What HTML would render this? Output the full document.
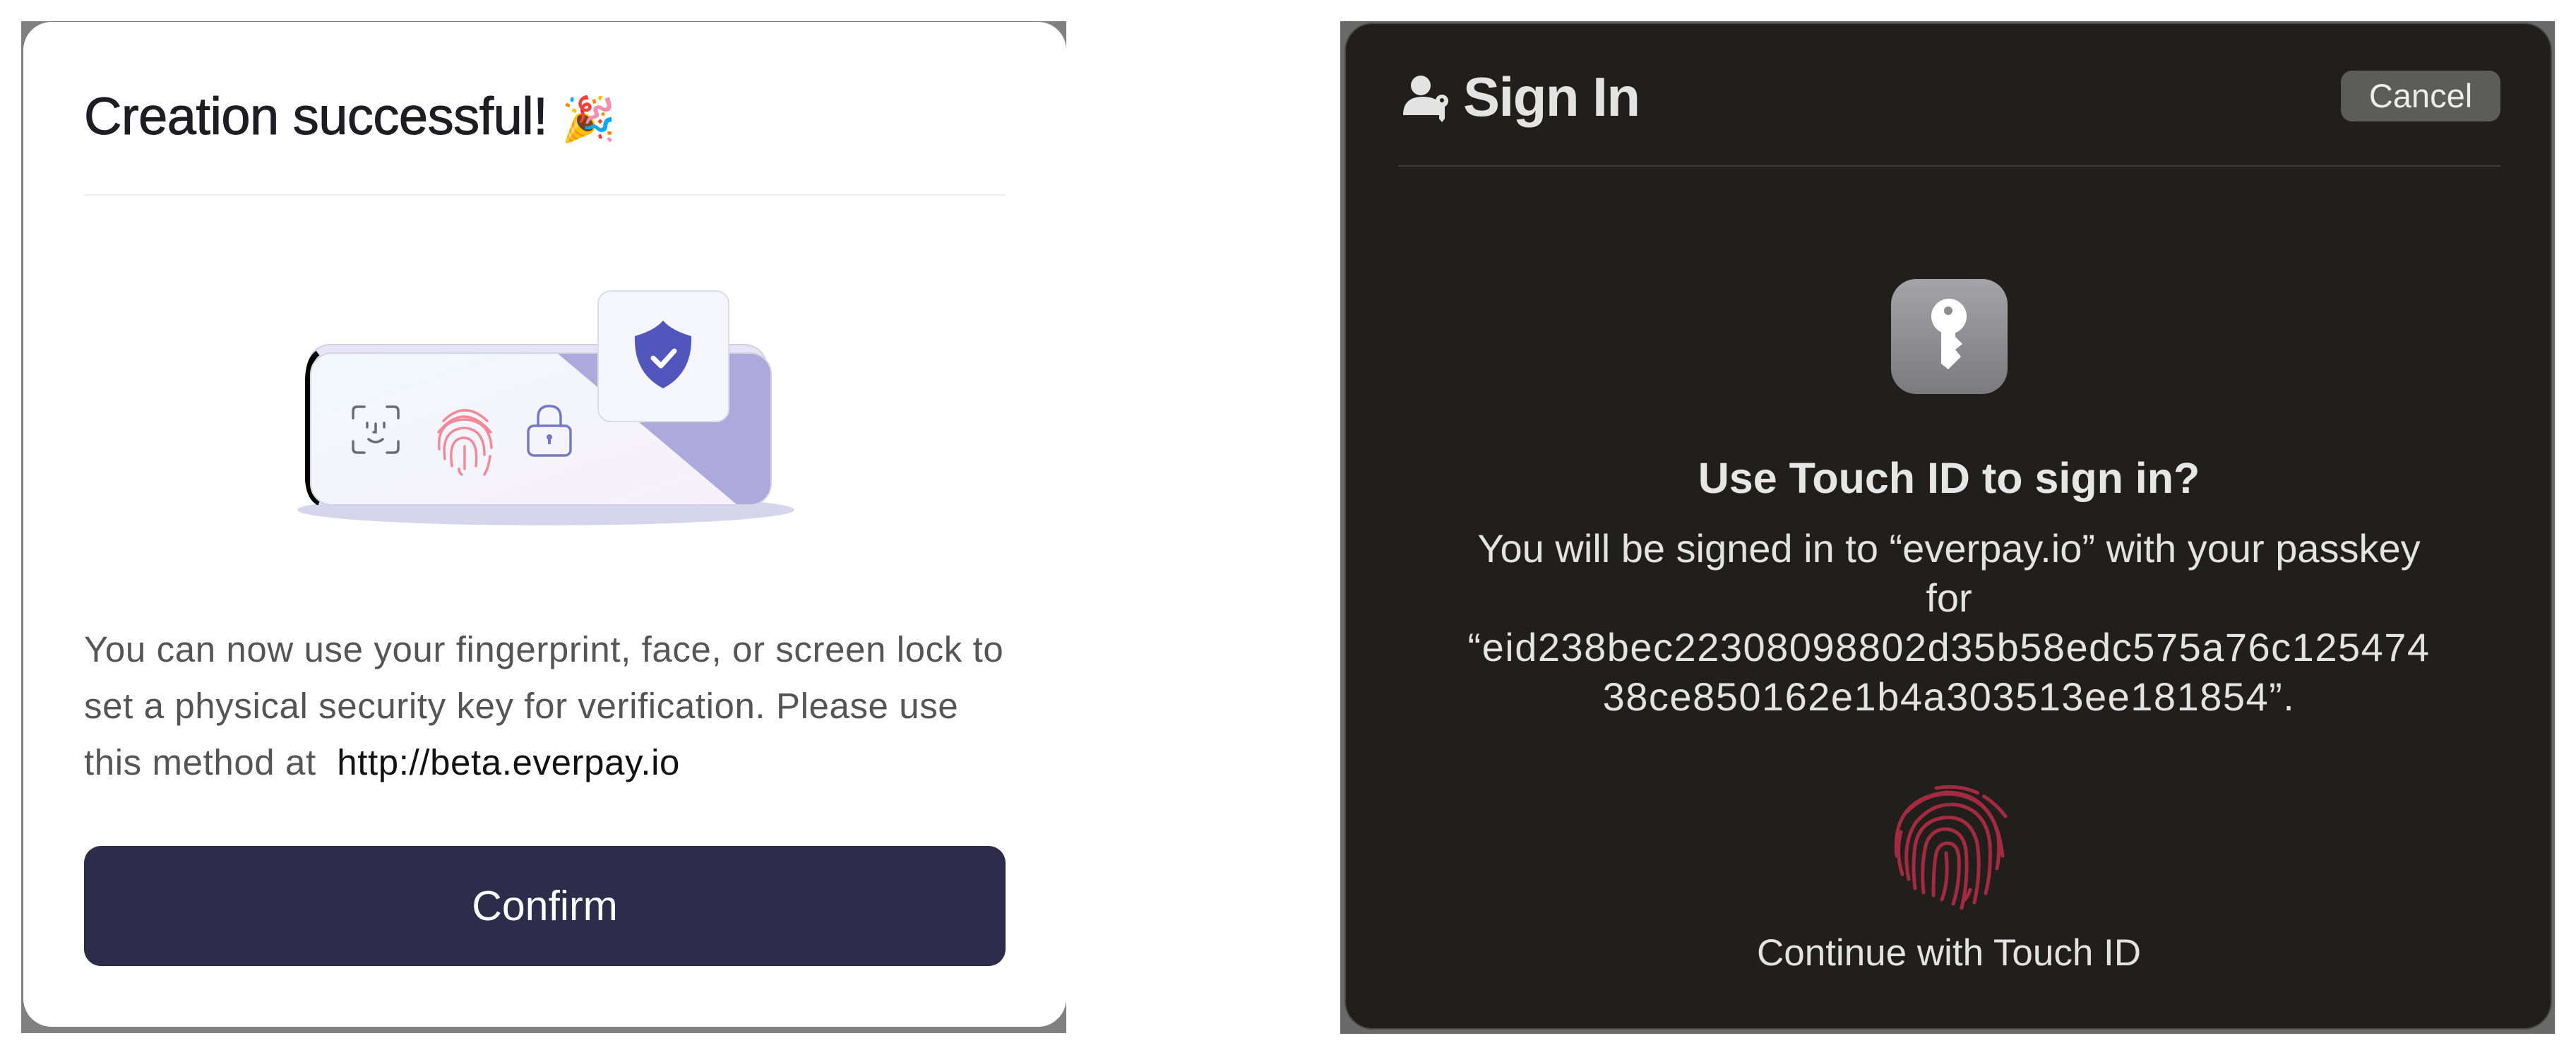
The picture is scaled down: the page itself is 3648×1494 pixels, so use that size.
<!DOCTYPE html>
<html><head><meta charset="utf-8"><style>
html,body{margin:0;padding:0;background:#fff;width:3648px;height:1494px;overflow:hidden;position:relative;font-family:"Liberation Sans",sans-serif}
.a{position:absolute;white-space:nowrap}
</style></head><body>
<div class="a" style="left:30px;top:30px;width:1480px;height:1433px;background:#808080"></div>
<div class="a" style="left:33px;top:31px;width:1477px;height:1423px;background:#fff;border-radius:40px"></div>
<div class="a" style="left:119px;top:122px;font-size:74px;color:#1e1e22;-webkit-text-stroke:1px #1e1e22;letter-spacing:-0.5px">Creation successful! <span style="font-size:62px;-webkit-text-stroke:0">🎉</span></div>
<div class="a" style="left:119px;top:275px;width:1305px;height:2px;background:#eeeef0"></div>
<div class="a" style="left:119px;top:880px;font-size:51px;line-height:80px;color:#555;letter-spacing:0.6px">
<div>You can now use your fingerprint, face, or screen lock to</div>
<div>set a physical security key for verification. Please use</div>
<div>this method at &nbsp;<span style="color:#111">http://beta.everpay.io</span></div>
</div>
<div class="a" style="left:119px;top:1198px;width:1305px;height:170px;background:#2d2c4b;border-radius:24px;color:#fff;font-size:59px;text-align:center;line-height:170px">Confirm</div>

<div class="a" style="left:1898px;top:30px;width:1720px;height:1434px;background:#6a6a6a"></div>
<div class="a" style="left:1904px;top:32px;width:1706px;height:1422px;background:#201f1c;border:2px solid #4a4a48;border-radius:40px"></div>
<div class="a" style="left:2072px;top:92px;font-size:78px;font-weight:bold;color:#e3e3e3;letter-spacing:-1.5px">Sign In</div>
<div class="a" style="left:3315px;top:100px;width:226px;height:72px;background:#5c5c5a;border-radius:16px;color:#ececec;font-size:47px;line-height:72px;text-align:center">Cancel</div>
<div class="a" style="left:1980px;top:234px;width:1561px;height:2px;background:#3c3b39"></div>
<div class="a" style="left:1960px;top:642px;width:1600px;text-align:center;font-size:61px;font-weight:bold;color:#e6e6e6">Use Touch ID to sign in?</div>
<div class="a" style="left:1960px;top:742px;width:1600px;text-align:center;font-size:56px;line-height:70px;color:#e3e3e3">
<div>You will be signed in to “everpay.io” with your passkey</div>
<div>for</div>
<div style="letter-spacing:1.5px">“eid238bec22308098802d35b58edc575a76c125474</div>
<div style="letter-spacing:1.5px">38ce850162e1b4a303513ee181854”.</div>
</div>
<div class="a" style="left:1960px;top:1319px;width:1600px;text-align:center;font-size:53px;color:#e3e3e3">Continue with Touch ID</div>

<svg class="a" style="left:0;top:0" width="3648" height="1494" viewBox="0 0 3648 1494">
<defs>
<linearGradient id="cg" x1="0" y1="0" x2="1" y2="1"><stop offset="0" stop-color="#f1f8fd"/><stop offset="1" stop-color="#f8f0fb"/></linearGradient>
<linearGradient id="kg" x1="0" y1="0" x2="0" y2="1"><stop offset="0" stop-color="#a4a4a8"/><stop offset="1" stop-color="#7b7b7f"/></linearGradient>
<clipPath id="cc"><rect x="440" y="500" width="652" height="215" rx="30"/></clipPath>
</defs>
<ellipse cx="773" cy="722" rx="352" ry="22" fill="#d6d5ec"/>
<rect x="436" y="488" width="650" height="225" rx="32" fill="#e6e4f6" stroke="#d0cfe0" stroke-width="2"/>
<path d="M450 500 Q436 510 436 540 L436 680 Q438 705 452 712" stroke="#000" stroke-width="8" fill="none"/>
<g clip-path="url(#cc)">
<rect x="440" y="500" width="652" height="215" fill="url(#cg)"/>
<polygon points="789,500 1092,500 1092,715 1044,715" fill="#ada9dd"/>
</g>
<rect x="440" y="500" width="652" height="215" rx="30" fill="none" stroke="#d4d3e2" stroke-width="2"/>
<g stroke="#6b6b70" stroke-width="3.5" fill="none" stroke-linecap="round">
<path d="M500 592v-10q0-6 6-6h10M548 576h10q6 0 6 6v10M564 625v10q0 6-6 6h-10M516 641h-10q-6 0-6-6v-10"/>
<path d="M520 599v6M544 599v6M532 600v12h-3M522 622q10 8 20 0"/>
</g>
<g stroke="#f08a99" stroke-width="3.5" fill="none" stroke-linecap="round">
<path d="M628 596q30-30 62 0M621 612q36-44 74 0M622 636q-4-40 36-42q36 2 38 40M630 650q-6-42 28-44q28 2 28 38M640 660q-6-40 18-40q20 2 16 40M658 632v32M650 664q0 6 4 8M694 646q-2 16-8 26"/>
</g>
<g stroke="#7478c9" stroke-width="3.5" fill="none">
<rect x="748" y="603" width="60" height="42" rx="8"/>
<path d="M762 603v-12q0-16 16-16q16 0 16 16v12"/>
</g>
<circle cx="778" cy="619" r="4" fill="#7478c9"/><rect x="776" y="620" width="4" height="9" fill="#7478c9"/>
<rect x="847" y="412" width="185" height="185" rx="18" fill="#f5f6fc" stroke="#dcdce8" stroke-width="2"/>
<path d="M939 454q12 14 40 22q2 52-40 74q-42-22-40-74q28-8 40-22z" fill="#5156bd"/>
<path d="M925 507l11 11 19-21" stroke="#fff" stroke-width="7" fill="none" stroke-linecap="round" stroke-linejoin="round"/>

<circle cx="2012" cy="121" r="14" fill="#e3e3e3"/>
<path d="M1987 163q0-26 28-26q20 0 26 12v14z" fill="#e3e3e3"/>
<circle cx="2042" cy="143" r="9" fill="#e3e3e3"/>
<path d="M2038 148h8v20l-4 5l-4-5z" fill="#e3e3e3"/>
<circle cx="2042" cy="142" r="3" fill="#201f1c"/>

<rect x="2678" y="395" width="165" height="163" rx="36" fill="url(#kg)"/>
<circle cx="2760" cy="448" r="25" fill="#fff"/>
<circle cx="2759" cy="440" r="6" fill="#8d8d91"/>
<path d="M2749 465h20v12l10 10l-10 8l8 10l-18 18l-10-8z" fill="#fff"/>

<g stroke="#a32a40" stroke-width="5" fill="none" stroke-linecap="round">
<path d="M2742 1116q60-10 98 40" stroke-dasharray="60 10"/>
<path d="M2686 1212q-8-80 70-90q70 0 80 90"/>
<path d="M2694 1238q-10-30 -2-60M2700 1150q30-30 70-25q50 8 60 60q2 25-2 45"/>
<path d="M2703 1245q-10-50 10-80q25-30 60-25q40 8 45 55q2 40-6 70"/>
<path d="M2712 1258q-4-30 0-60q6-35 40-40q38-4 48 36q6 40-4 84"/>
<path d="M2724 1264q-4-40 4-70q8-20 28-20q24 2 28 30q4 40-6 82"/>
<path d="M2738 1268q0-40 4-60q4-14 16-14q14 0 16 20q2 36-8 66"/>
<path d="M2756 1208q4 40-6 66M2790 1260q-4 12-10 16"/>
</g>
</svg>
</body></html>
